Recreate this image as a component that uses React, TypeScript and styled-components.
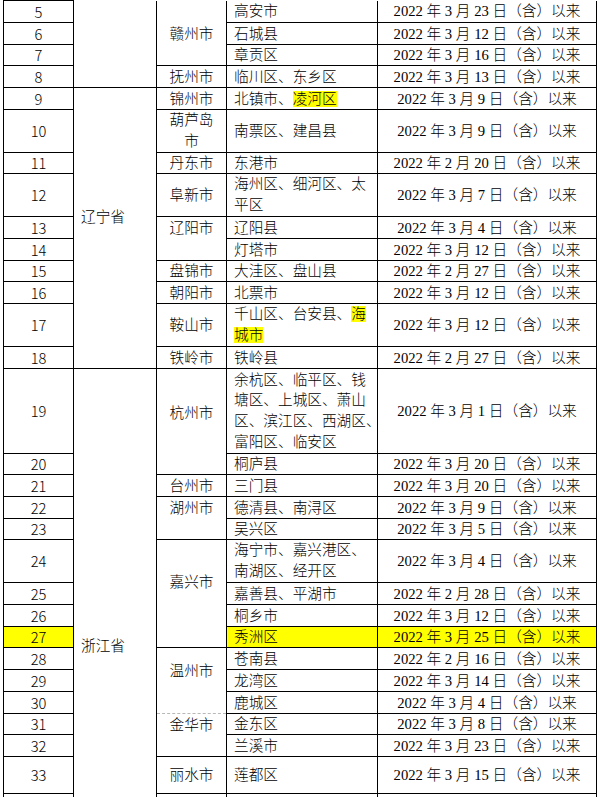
import React from "react";
import styled, { createGlobalStyle, css } from "styled-components";

const Global = createGlobalStyle`
  html, body {
    margin: 0;
    padding: 0;
    background: #fff;
  }
  body {
    width: 600px;
    height: 797px;
    overflow: hidden;
  }
`;

const LINE = 20;
const MULTI = 20.7;
const YELLOW = "#ffff00";

const Page = styled.div`
  padding-left: 3px;
  font-family: "Liberation Serif", "Noto Sans CJK SC", serif;
  font-size: 14.67px;
  font-weight: 300;
  color: #000;
`;

const Table = styled.table`
  border-collapse: collapse;
  table-layout: fixed;
  width: 593px;
`;

const Col = styled.col<{ $w: number }>`
  width: ${(p) => p.$w}px;
`;

const Row = styled.tr<{ $h: number }>`
  height: ${(p) => p.$h}px;
`;

const base = css<{ $multi?: boolean }>`
  border: 1px solid #000;
  padding: 0;
  line-height: ${(p) => (p.$multi ? MULTI : LINE)}px;
  white-space: nowrap;
  overflow: visible;
`;

const offsetCss = (offset?: number) =>
  offset === undefined
    ? css`
        vertical-align: middle;
      `
    : css`
        vertical-align: top;
        padding-top: ${offset - LINE / 2}px;
      `;

const NumCell = styled.td<{ $mark?: boolean; $first?: boolean; $multi?: boolean }>`
  ${base};
  text-align: center;
  vertical-align: middle;
  font-family: "Noto Sans CJK SC", "Liberation Sans", sans-serif;
  font-size: 14.67px;
  font-weight: 300;
  background: ${(p) => (p.$mark ? YELLOW : "transparent")};
  border-top: ${(p) => (p.$first ? "1px solid #000" : undefined)};
`;

const ProvCell = styled.td<{ $offset?: number; $open?: boolean; $multi?: boolean }>`
  ${base};
  padding-left: 7px;
  text-align: left;
  ${(p) => offsetCss(p.$offset)};
  ${(p) =>
    p.$open &&
    css`
      border-top: none;
    `}
`;

const CityCell = styled.td<{
  $offset?: number;
  $dashTop?: boolean;
  $dashBottom?: boolean;
  $open?: boolean;
  $multi?: boolean;
}>`
  ${base};
  text-align: center;
  ${(p) => offsetCss(p.$offset)};
  ${(p) =>
    p.$dashTop &&
    css`
      border-top: 1px dashed #b8b8b8;
    `}
  ${(p) =>
    p.$dashBottom &&
    css`
      border-bottom: 1px dashed #b8b8b8;
    `}
  ${(p) =>
    p.$open &&
    css`
      border-top: none;
    `}
`;

const AreaCell = styled.td<{ $mark?: boolean; $open?: boolean; $multi?: boolean }>`
  ${base};
  padding-left: 7px;
  text-align: left;
  vertical-align: middle;
  background: ${(p) => (p.$mark ? YELLOW : "transparent")};
  ${(p) =>
    p.$open &&
    css`
      border-top: none;
    `}
`;

const DateCell = styled.td<{ $mark?: boolean; $open?: boolean; $multi?: boolean }>`
  ${base};
  text-align: center;
  vertical-align: middle;
  background: ${(p) => (p.$mark ? YELLOW : "transparent")};
  ${(p) =>
    p.$open &&
    css`
      border-top: none;
    `}
`;

const Mark = styled.span`
  background: linear-gradient(${YELLOW}, ${YELLOW}) 0 50% / 100% 18px no-repeat;
  -webkit-box-decoration-break: clone;
  box-decoration-break: clone;
`;

type City = {
  name: string[];
  span: number;
  offset?: number;
  dashTop?: boolean;
  dashBottom?: boolean;
};

type Prov = { name: string; span: number; offset?: number };

type Item = {
  n?: number;
  h: number;
  prov?: Prov;
  city?: City;
  area: React.ReactNode[];
  date?: [number, number];
  mark?: boolean;
};

const rows: Item[] = [
  { n: 5, h: 22, prov: { name: "", span: 4 }, city: { name: ["赣州市"], span: 3, offset: 33 }, area: ["高安市"], date: [3, 23] },
  { n: 6, h: 22, area: ["石城县"], date: [3, 12] },
  { n: 7, h: 21, area: ["章贡区"], date: [3, 16] },
  { n: 8, h: 22, city: { name: ["抚州市"], span: 1 }, area: ["临川区、东乡区"], date: [3, 13] },
  { n: 9, h: 22, prov: { name: "辽宁省", span: 10, offset: 129 }, city: { name: ["锦州市"], span: 1 }, area: [<>北镇市、<Mark>凌河区</Mark></>], date: [3, 9] },
  { n: 10, h: 43, city: { name: ["葫芦岛", "市"], span: 1 }, area: ["南票区、建昌县"], date: [3, 9] },
  { n: 11, h: 21, city: { name: ["丹东市"], span: 1 }, area: ["东港市"], date: [2, 20] },
  { n: 12, h: 43, city: { name: ["阜新市"], span: 1 }, area: ["海州区、细河区、太", "平区"], date: [3, 7] },
  { n: 13, h: 22, city: { name: ["辽阳市"], span: 2, offset: 11 }, area: ["辽阳县"], date: [3, 4] },
  { n: 14, h: 22, area: ["灯塔市"], date: [3, 12] },
  { n: 15, h: 21, city: { name: ["盘锦市"], span: 1 }, area: ["大洼区、盘山县"], date: [2, 27] },
  { n: 16, h: 22, city: { name: ["朝阳市"], span: 1 }, area: ["北票市"], date: [3, 12] },
  { n: 17, h: 43, city: { name: ["鞍山市"], span: 1 }, area: [<>千山区、台安县、<Mark>海</Mark></>, <Mark>城市</Mark>], date: [3, 12] },
  { n: 18, h: 22, city: { name: ["铁岭市"], span: 1 }, area: ["铁岭县"], date: [2, 27] },
  {
    n: 19,
    h: 85,
    prov: { name: "浙江省", span: 16, offset: 277 },
    city: { name: ["杭州市"], span: 2, offset: 44 },
    area: ["余杭区、临平区、钱", "塘区、上城区、萧山", "区、滨江区、西湖区、", "富阳区、临安区"],
    date: [3, 1],
  },
  { n: 20, h: 21, area: ["桐庐县"], date: [3, 20] },
  { n: 21, h: 22, city: { name: ["台州市"], span: 1 }, area: ["三门县"], date: [3, 20] },
  { n: 22, h: 22, city: { name: ["湖州市"], span: 2, offset: 11 }, area: ["德清县、南浔区"], date: [3, 9] },
  { n: 23, h: 21, area: ["吴兴区"], date: [3, 5] },
  { n: 24, h: 43, city: { name: ["嘉兴市"], span: 4, offset: 42 }, area: ["海宁市、嘉兴港区、", "南湖区、经开区"], date: [3, 4] },
  { n: 25, h: 22, area: ["嘉善县、平湖市"], date: [2, 28] },
  { n: 26, h: 22, area: ["桐乡市"], date: [3, 12] },
  { n: 27, h: 21, area: ["秀洲区"], date: [3, 25], mark: true },
  { n: 28, h: 22, city: { name: ["温州市"], span: 3, offset: 23, dashBottom: true }, area: ["苍南县"], date: [2, 16] },
  { n: 29, h: 22, area: ["龙湾区"], date: [3, 14] },
  { n: 30, h: 22, area: ["鹿城区"], date: [3, 4] },
  { n: 31, h: 21, city: { name: ["金华市"], span: 2, offset: 11, dashTop: true }, area: ["金东区"], date: [3, 8] },
  { n: 32, h: 22, area: ["兰溪市"], date: [3, 23] },
  { n: 33, h: 37, city: { name: ["丽水市"], span: 1 }, area: ["莲都区"], date: [3, 15] },
  { h: 22, city: { name: [], span: 1 }, area: [] },
];

const lines = (items: React.ReactNode[]) =>
  items.map((item, i) => (
    <React.Fragment key={i}>
      {i > 0 && <br />}
      {item}
    </React.Fragment>
  ));

const dateText = (d?: [number, number]) =>
  d ? `2022 年 ${d[0]} 月 ${d[1]} 日（含）以来` : "";

export default function App() {
  return (
    <Page>
      <Global />
      <Table>
        <colgroup>
          <Col $w={70} />
          <Col $w={83} />
          <Col $w={70} />
          <Col $w={151} />
          <Col $w={219} />
        </colgroup>
        <tbody>
          {rows.map((r, i) => {
            const first = i === 0;
            return (
              <Row key={i} $h={r.h}>
                <NumCell $mark={r.mark} $first={first}>
                  {r.n}
                </NumCell>
                {r.prov && (
                  <ProvCell rowSpan={r.prov.span} $offset={r.prov.offset} $open={first}>
                    {r.prov.name}
                  </ProvCell>
                )}
                {r.city && (
                  <CityCell
                    rowSpan={r.city.span}
                    $offset={r.city.offset}
                    $dashTop={r.city.dashTop}
                    $dashBottom={r.city.dashBottom}
                    $open={first}
                    $multi={r.city.name.length > 1}
                  >
                    {lines(r.city.name)}
                  </CityCell>
                )}
                <AreaCell $mark={r.mark} $open={first} $multi={r.area.length > 1}>
                  {lines(r.area)}
                </AreaCell>
                <DateCell $mark={r.mark} $open={first}>
                  {dateText(r.date)}
                </DateCell>
              </Row>
            );
          })}
        </tbody>
      </Table>
    </Page>
  );
}
